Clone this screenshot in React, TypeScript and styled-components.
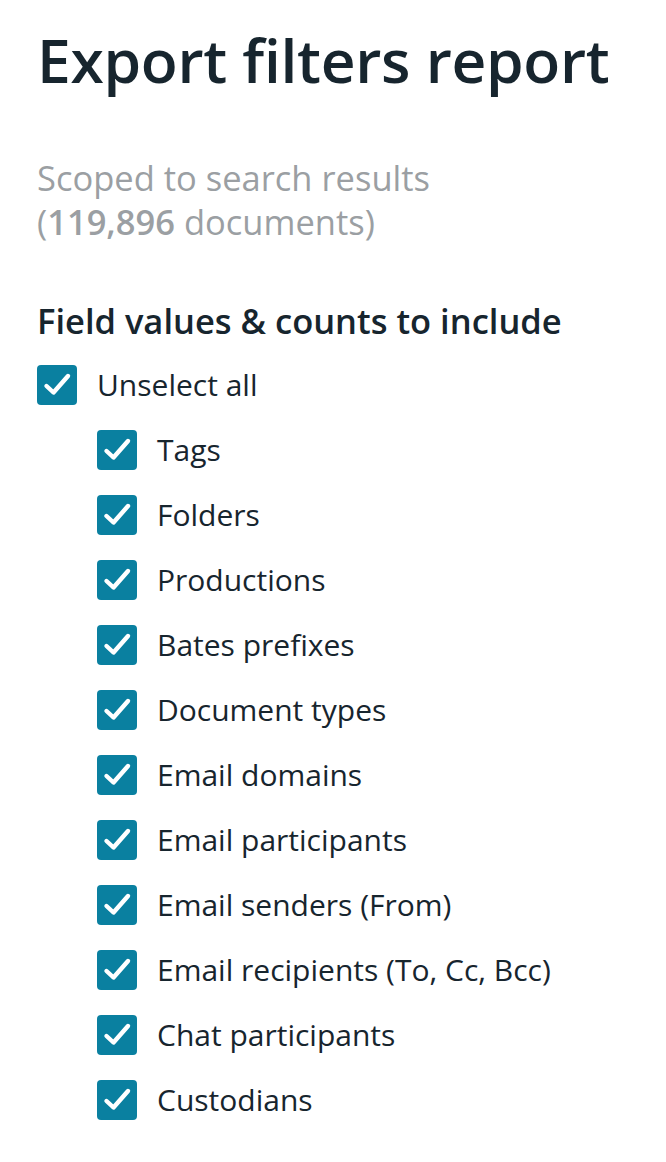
import React from "react";
import styled, { createGlobalStyle } from "styled-components";

const GlobalStyle = createGlobalStyle`
  body {
    margin: 0;
    background: #ffffff;
    font-family: "Open Sans", "Noto Sans", sans-serif;
  }
`;

const fields = [
  "Tags",
  "Folders",
  "Productions",
  "Bates prefixes",
  "Document types",
  "Email domains",
  "Email participants",
  "Email senders (From)",
  "Email recipients (To, Cc, Bcc)",
  "Chat participants",
  "Custodians",
];

const Check = () => (
  <svg width="40" height="40" viewBox="0 0 40 40" fill="none">
    <polyline
      points="9.5,21 16.5,27.5 31,11"
      stroke="#ffffff"
      strokeWidth="4.4"
      strokeLinecap="round"
      strokeLinejoin="round"
    />
  </svg>
);

const App = () => {
  return (
    <>
      <GlobalStyle />
      <Page>
        <Title>Export filters report</Title>
        <Scope>
          Scoped to search results
          <br />(<strong>119,896</strong> documents)
        </Scope>
        <Heading>Field values &amp; counts to include</Heading>
        <List>
          <Row>
            <Box>
              <Check />
            </Box>
            <Label>Unselect all</Label>
          </Row>
          <Nested>
            {fields.map((f) => (
              <Row key={f}>
                <Box>
                  <Check />
                </Box>
                <Label>{f}</Label>
              </Row>
            ))}
          </Nested>
        </List>
      </Page>
    </>
  );
};

export default App;

const Page = styled.div`
  padding: 18px 37px 40px;
  color: #17252e;
`;

const Title = styled.h1`
  margin: 0;
  font-size: 60.5px;
  font-weight: 600;
  line-height: 84px;
  letter-spacing: -0.3px;
`;

const Scope = styled.p`
  margin: 54px 0 0;
  font-size: 34.5px;
  line-height: 44px;
  color: #9b9fa3;

  strong {
    font-weight: 600;
  }
`;

const Heading = styled.h2`
  margin: 55px 0 0;
  font-size: 34.5px;
  font-weight: 600;
  line-height: 44px;
`;

const List = styled.div`
  margin-top: 22px;
  display: flex;
  flex-direction: column;
  gap: 25px;
`;

const Nested = styled.div`
  padding-left: 60px;
  display: flex;
  flex-direction: column;
  gap: 25px;
`;

const Row = styled.div`
  display: flex;
  align-items: center;
  gap: 20px;
  height: 40px;
`;

const Box = styled.span`
  width: 40px;
  height: 40px;
  flex: none;
  border-radius: 4px;
  background: #0a80a0;
  display: flex;
`;

const Label = styled.span`
  font-size: 30px;
  line-height: 40px;
`;
